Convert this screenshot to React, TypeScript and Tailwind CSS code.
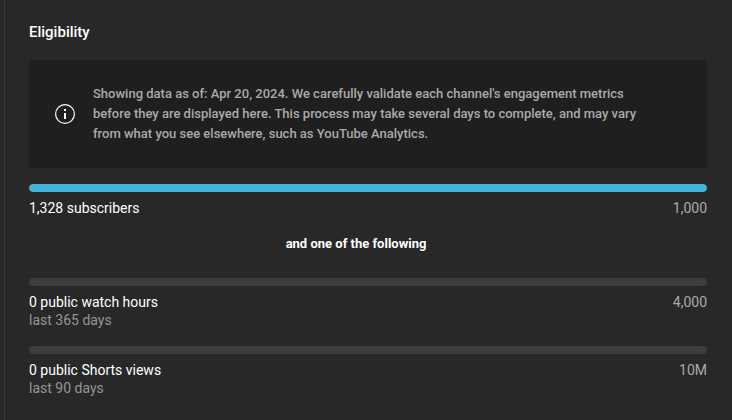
function Metric({ label, sub, goal, fill }: { label: string; sub?: string; goal: string; fill?: boolean }) {
  return (
    <div>
      <div className="h-2 rounded-full bg-[#3d3d3d] overflow-hidden">
        {fill && <div className="h-full w-full rounded-full bg-[#41b4d9]" />}
      </div>
      <div className="mt-1.5 flex justify-between text-[14px] leading-[20px]">
        <div>
          <div className="text-white">{label}</div>
          {sub && <div className="text-[#959595] leading-[16px]">{sub}</div>}
        </div>
        <div className="text-[#aaaaaa]">{goal}</div>
      </div>
    </div>
  );
}

export default function App() {
  return (
    <div className="h-[420px] w-[732px] overflow-hidden bg-[#282828] font-['Roboto',sans-serif]">
      <div className="h-full ml-1 border-l border-[#3a3a3a] pl-6 pr-[25px] pt-[22px]">
        <h2 className="text-[15px] leading-[20px] font-medium text-white">Eligibility</h2>
        <div className="mt-[18px] h-[108px] bg-[#1f1f1f] flex items-center pl-[26px]">
          <svg width="20" height="20" viewBox="0 0 20 20" fill="none" className="shrink-0">
            <circle cx="10" cy="10" r="9.4" stroke="#fff" strokeWidth="1.2" />
            <rect x="9" y="9" width="2" height="6" fill="#fff" />
            <rect x="9" y="5" width="2" height="2" fill="#fff" />
          </svg>
          <p className="ml-[18px] w-[556px] text-[13px] leading-[20px] font-medium text-[#aaaaaa]">
            Showing data as of: Apr 20, 2024. We carefully validate each channel's engagement metrics before they are displayed here. This process may take several days to complete, and may vary from what you see elsewhere, such as YouTube Analytics.
          </p>
        </div>
        <div className="mt-4">
          <Metric label="1,328 subscribers" goal="1,000" fill />
        </div>
        <div className="mt-4 pr-6 text-center text-[13px] leading-[20px] font-bold text-white">and one of the following</div>
        <div className="mt-6">
          <Metric label="0 public watch hours" sub="last 365 days" goal="4,000" />
        </div>
        <div className="mt-[18px]">
          <Metric label="0 public Shorts views" sub="last 90 days" goal="10M" />
        </div>
      </div>
    </div>
  );
}
